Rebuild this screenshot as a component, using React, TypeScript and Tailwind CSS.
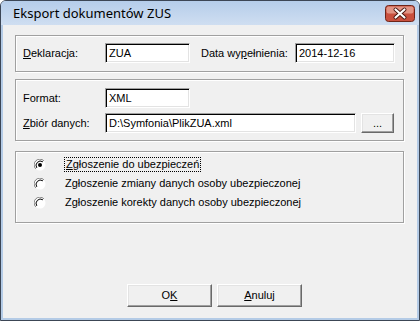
import React from "react";

const dlg = { fontFamily: '"Liberation Sans", Arial, sans-serif' };

function Edit({ w, value }: { w: string; value: string }) {
  return (
    <div
      className={`${w} h-[20px] bg-white border border-t-[#a0a0a0] border-l-[#a0a0a0] border-b-white border-r-white shadow-[inset_1px_1px_0_#000,inset_-1px_-1px_0_#e3e3e3] flex items-center pl-[3px] text-[11px] text-black leading-none`}
    >
      {value}
    </div>
  );
}

function Button({ w, h, children }: { w: string; h: string; children: React.ReactNode }) {
  return (
    <div
      className={`${w} ${h} bg-[#f0f0f0] border border-t-white border-l-white border-b-[#696969] border-r-[#696969] shadow-[inset_-1px_-1px_0_#a0a0a0,inset_1px_1px_0_#e3e3e3] flex items-center justify-center text-[11px] text-black leading-none`}
    >
      {children}
    </div>
  );
}

function Radio({ checked }: { checked?: boolean }) {
  return (
    <svg width="12" height="12" viewBox="0 0 12 12" className="shrink-0">
      <circle cx="6" cy="6" r="5.5" fill="#ffffff" />
      <path d="M1.8 9.9 A5.5 5.5 0 0 1 9.9 1.8" fill="none" stroke="#808080" strokeWidth="1" />
      <path d="M2.8 8.9 A4.4 4.4 0 0 1 8.9 2.8" fill="none" stroke="#000000" strokeWidth="1" />
      {checked && <circle cx="6" cy="6" r="2" fill="#000" />}
    </svg>
  );
}

function CloseButton() {
  return (
    <svg width="30" height="17" viewBox="0 0 30 17" className="shrink-0 block">
      <rect x="0.5" y="0.5" width="29" height="16" rx="3" fill="#c9503e" stroke="#6e2418" />
      <rect x="1.5" y="1.5" width="27" height="7" rx="2" fill="#e29484" />
      <path d="M10.5 4.5 L19.5 12.5 M19.5 4.5 L10.5 12.5" stroke="#4a1710" strokeWidth="4" strokeLinecap="round" />
      <path d="M10.5 4.5 L19.5 12.5 M19.5 4.5 L10.5 12.5" stroke="#ffffff" strokeWidth="2.2" strokeLinecap="round" />
    </svg>
  );
}

const groupCls =
  "ml-[12px] w-[389px] border border-[#a0a0a0] shadow-[1px_1px_0_#ffffff,inset_1px_1px_0_#ffffff]";

export default function App() {
  return (
    <div className="w-[420px] h-[321px] bg-white" style={dlg}>
      <div className="w-[420px] h-[321px] flex flex-col border border-[#3c4655] rounded-t-[6px] bg-[#b4cbe6] overflow-hidden">
        <div className="h-[24px] shrink-0 flex items-center justify-between pl-[12px] pr-[4px] bg-[#c0d4ec] bg-[linear-gradient(to_bottom,#b5cdea,#cfdef1)]">
          <span
            className="text-[13px] text-black leading-none"
            style={{ fontFamily: '"Noto Sans", "Open Sans", sans-serif' }}
          >
            Eksport dokumentów ZUS
          </span>
          <CloseButton />
        </div>
        <div className="flex-1 mx-[2px] mb-[2px] bg-[#f0f0f0] flex flex-col text-[11px] text-black">
          {/* group 1 */}
          <div className={`${groupCls} mt-[10px] h-[37px] pl-[7px] pt-[7px]`}>
            <div className="flex items-center h-[20px]">
              <span className="w-[82px] leading-none">
                <span className="underline">D</span>eklaracja:
              </span>
              <Edit w="w-[85px]" value="ZUA" />
              <span className="ml-[11px] w-[94px] leading-none">
                Data wy<span className="underline">p</span>ełnienia:
              </span>
              <Edit w="w-[100px]" value="2014-12-16" />
            </div>
          </div>
          {/* group 2 */}
          <div className={`${groupCls} mt-[7px] h-[62px] pl-[7px] pt-[8px] flex flex-col gap-[5px]`}>
            <div className="flex items-center h-[20px]">
              <span className="w-[82px] leading-none">Format:</span>
              <Edit w="w-[85px]" value="XML" />
            </div>
            <div className="flex items-center h-[20px]">
              <span className="w-[82px] leading-none">
                <span className="underline">Z</span>biór danych:
              </span>
              <Edit w="w-[251px]" value="D:\Symfonia\PlikZUA.xml" />
              <div className="ml-[5px]">
                <Button w="w-[33px]" h="h-[20px]">...</Button>
              </div>
            </div>
          </div>
          {/* group 3 */}
          <div className={`${groupCls} mt-[10px] h-[72px] pl-[18px] pt-[3px] flex flex-col`}>
            <div className="flex items-center h-[19px]">
              <Radio checked />
              <span className="ml-[18px] h-[15px] px-[1px] border border-dotted border-black flex items-center leading-none">
                <span className="underline">Z</span>głoszenie do ubezpieczeń
              </span>
            </div>
            <div className="flex items-center h-[19px]">
              <Radio />
              <span className="ml-[19px] leading-none">Zgłoszenie zmiany danych osoby ubezpieczonej</span>
            </div>
            <div className="flex items-center h-[19px]">
              <Radio />
              <span className="ml-[19px] leading-none">Zgłoszenie korekty danych osoby ubezpieczonej</span>
            </div>
          </div>
          {/* buttons */}
          <div className="mt-[61px] ml-[124px] flex gap-[5px]">
            <Button w="w-[85px]" h="h-[23px]">
              O<span className="underline">K</span>
            </Button>
            <Button w="w-[85px]" h="h-[23px]">
              <span className="underline">A</span>nuluj
            </Button>
          </div>
        </div>
      </div>
    </div>
  );
}
